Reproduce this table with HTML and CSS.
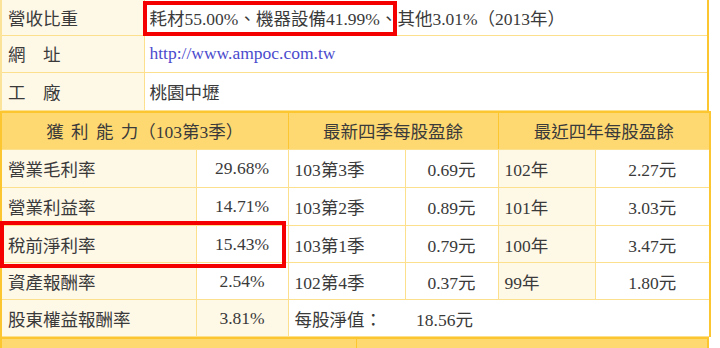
FILE: index.html
```html
<!DOCTYPE html>
<html lang="zh-Hant">
<head>
<meta charset="utf-8">
<title>營收比重</title>
<link rel="stylesheet" href="styles.css">
</head>
<body>
<div class="page">
  <table class="info">
    <colgroup><col class="c-lab"><col></colgroup>
    <tr class="r1"><td class="lab">營收比重</td><td class="val">耗材55.00%、機器設備41.99%、其他3.01%（2013年）</td></tr>
    <tr class="r2"><td class="lab">網　址</td><td class="val"><a class="link" href="#">http://www.ampoc.com.tw</a></td></tr>
    <tr class="r3"><td class="lab">工　廠</td><td class="val">桃園中壢</td></tr>
  </table>
  <table class="stats">
    <colgroup>
      <col class="w1"><col class="w2"><col class="w3"><col class="w4"><col class="w5"><col class="w6">
    </colgroup>
    <tr class="head">
      <th colspan="2"><span class="spaced">獲 利 能 力</span>（103第3季）</th>
      <th colspan="2">最新四季每股盈餘</th>
      <th colspan="2">最近四年每股盈餘</th>
    </tr>
    <tr class="d1">
      <td class="lab">營業毛利率</td><td class="num">29.68%</td>
      <td class="plain">103第3季</td><td class="num">0.69元</td>
      <td class="lab">102年</td><td class="num">2.27元</td>
    </tr>
    <tr class="d2">
      <td class="lab">營業利益率</td><td class="num">14.71%</td>
      <td class="plain">103第2季</td><td class="num">0.89元</td>
      <td class="lab">101年</td><td class="num">3.03元</td>
    </tr>
    <tr class="d3">
      <td class="lab">稅前淨利率</td><td class="num">15.43%</td>
      <td class="plain">103第1季</td><td class="num">0.79元</td>
      <td class="lab">100年</td><td class="num">3.47元</td>
    </tr>
    <tr class="d4">
      <td class="lab">資產報酬率</td><td class="num">2.54%</td>
      <td class="plain">102第4季</td><td class="num">0.37元</td>
      <td class="lab">99年</td><td class="num">1.80元</td>
    </tr>
    <tr class="d5">
      <td class="lab">股東權益報酬率</td><td class="num lab">3.81%</td>
      <td class="plain" colspan="4">每股淨值：<span class="nav">18.56元</span></td>
    </tr>
  </table>
  <table class="foot">
    <tr><td class="f1"></td><td class="f2"></td></tr>
  </table>
  <div class="mark mark-a"></div>
  <div class="mark mark-b"></div>
</div>
</body>
</html>
```
FILE: styles.css
```css
html, body {
  margin: 0;
  padding: 0;
  overflow: hidden;
  background: #ffffff;
}
.page {
  position: relative;
  width: 709px;
  font-family: "Liberation Serif", "Noto Sans CJK TC", serif;
  font-size: 17.5px;
  color: #3a3a3a;
}
table {
  width: 709px;
  border-collapse: collapse;
  table-layout: fixed;
  border-right: 2px solid #fbc630;
  border-left: 2px solid #fce39a;
}
td, th {
  box-sizing: border-box;
  padding: 0 6px;
  border: 1px solid #fde08e;
  white-space: nowrap;
  font-weight: normal;
}
.c-lab { width: 143px; }
.info .r1 { height: 35px; }
.info .r2 { height: 37px; }
.info .r3 { height: 38px; }
.info tr:first-child td { border-top: none; }
.lab { background: #fef8e7; }
.val { background: #ffffff; padding-left: 5px; }
.link { color: #4b4bcd; text-decoration: none; }

.w1 { width: 195px; }
.w2 { width: 92px; }
.w3 { width: 117px; }
.w4 { width: 93px; }
.w5 { width: 97px; }
.w6 { width: 115px; }

.stats { border-left-color: #fbc630; }
.stats .head { height: 38px; }
.stats .head th {
  background: #fed972;
  border-top: 2px solid #fbc630;
  border-color: #fbc630;
  border-bottom-color: #fde08e;
  text-align: center;
}
.spaced { word-spacing: 3px; }
.stats .d1, .stats .d2 { height: 38px; }
.stats .d3, .stats .d4, .stats .d5 { height: 37px; }
.plain { background: #ffffff; }
.num { text-align: center; background: #ffffff; }
.num.lab { background: #fef8e7; }
.nav { margin-left: 34px; }

.foot {
  border-top: 2px solid #fbc630;
  border-left-color: #fbc630;
}
.foot tr { height: 37px; }
.foot td { background: #fed972; border-color: #fbc630; }
.f1 { width: 355px; }

.mark {
  position: absolute;
  border: 4px solid #f50000;
  box-sizing: border-box;
}
.mark-a { left: 143px; top: 1px; width: 254px; height: 35px; }
.mark-b { left: 0; top: 221px; width: 286px; height: 47px; }
```
